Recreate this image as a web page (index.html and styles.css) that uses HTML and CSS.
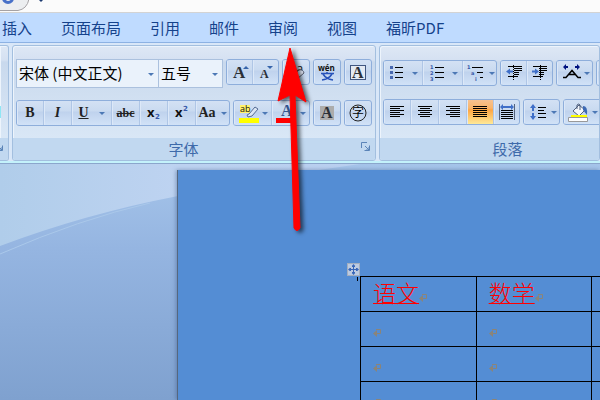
FILE: index.html
```
<!DOCTYPE html>
<html lang="zh-CN">

<head>
    <meta charset="utf-8">
    <title>Word</title>
    <link rel="stylesheet" href="styles.css">
</head>

<body>
    <div class="titlebar">
        <svg width="60" height="12" viewBox="0 0 60 12">
            <path d="M-2 10.500H18Q27 9 29 -1H-2Z" fill="#eceef0" stroke="#a5a2a5" />
            <circle cx="8" cy="-2" r="4.500" fill="none" stroke="#4770c8" stroke-width="3" />
            <path d="M39 0h4l-2 2z" fill="#1c3a70" />
        </svg>
    </div>
    <nav class="tabs">
        <a href="#">插入</a>
        <a href="#">页面布局</a>
        <a href="#">引用</a>
        <a href="#">邮件</a>
        <a href="#">审阅</a>
        <a href="#">视图</a>
        <a href="#">福昕PDF</a>
    </nav>

    <div class="ribbon">
        <div class="group clipboard">
            <div class="paste"></div>
            <div class="group-label">
                <button class="launcher" aria-label="剪贴板选项">
                    <svg width="9" height="9" viewBox="0 0 9 9"><path d="M.5 6V.5H6M3.500 8.500h5v-5M4 4l4 4M8 5v3H5" fill="none" stroke="#5b84b8" /></svg>
                </button>
            </div>
        </div>

        <div class="group font">
            <div class="rows">
                <div class="row">
                    <div class="combos">
                        <div class="combo family">
                            <select aria-label="字体"><option>宋体 (中文正文)</option></select>
                            <i class="arrow"></i>
                        </div>
                        <div class="combo size">
                            <select aria-label="字号"><option>五号</option></select>
                            <i class="arrow"></i>
                        </div>
                    </div>
                    <div class="btns">
                        <button class="w26" aria-label="增大字体">
                            <svg width="24" height="24" viewBox="0 0 24 24"><text class="serif" x="5" y="18" font-size="17">A</text><path d="M15 9l3-3 3 3z" fill="#3765ab" /></svg>
                        </button>
                        <button class="w25" aria-label="缩小字体">
                            <svg width="24" height="24" viewBox="0 0 24 24"><text class="serif" x="6" y="18" font-size="12">A</text><path d="M13 6h6l-3 3z" fill="#3765ab" /></svg>
                        </button>
                    </div>
                    <div class="btns">
                        <button class="w26" aria-label="清除格式">
                            <svg width="24" height="24" viewBox="0 0 24 24"><text class="sans" x="5" y="13" font-size="12">Aa</text><path d="M8 16l7-6q4-1 5 3l-7 6q-4 1-5-3z" fill="#dce3f2" stroke="#555c70" /></svg>
                        </button>
                    </div>
                    <div class="btns">
                        <button class="w26" aria-label="拼音指南">
                            <svg width="24" height="24" viewBox="0 0 24 24"><text class="sans bolder" x="3" y="11" font-size="8">wén</text><path d="M12 12v2M6 13.500h13M8 14q3 5 10 6M17 14q-3 5-10 6" fill="none" stroke="#2853ba" stroke-width="1.500" /></svg>
                        </button>
                    </div>
                    <div class="btns">
                        <button class="w26" aria-label="字符边框">
                            <svg width="24" height="24" viewBox="0 0 24 24"><rect x="4.500" y="5.500" width="15" height="14" fill="#e3e9f2" stroke="#405680" /><text class="serif" x="6" y="18" font-size="16">A</text></svg>
                        </button>
                    </div>
                </div>

                <div class="row">
                    <div class="btns">
                        <button class="w27 bold">B</button>
                        <button class="w28 italic">I</button>
                        <button class="w40 underline"><u>U</u><i class="arrow"></i></button>
                        <button class="w28 strike"><s>abc</s></button>
                        <button class="w28" aria-label="下标">
                            <svg width="24" height="24" viewBox="0 0 24 24"><text class="sans bolder" x="5" y="16" font-size="13">x</text><text class="blue" x="13" y="18" font-size="7">2</text></svg>
                        </button>
                        <button class="w28" aria-label="上标">
                            <svg width="24" height="24" viewBox="0 0 24 24"><text class="sans bolder" x="5" y="16" font-size="13">x</text><text class="blue" x="13" y="10" font-size="7">2</text></svg>
                        </button>
                        <button class="w33 case">Aa<i class="arrow"></i></button>
                    </div>
                    <div class="btns">
                        <button class="w38" aria-label="突出显示">
                            <svg width="24" height="24" viewBox="0 0 24 24"><path d="M2 4h10v8H2z" fill="#fff36b" /><text class="sans" x="2" y="11" font-size="9">ab</text><path d="M9 14l2-1 6-7 3 2-6 7-4 1z" fill="#dce6f5" stroke="#536a93" /><path d="M1 17h20v5H1z" fill="#ff0" /></svg>
                            <i class="arrow"></i>
                        </button>
                        <button class="w37" aria-label="字体颜色">
                            <svg width="24" height="24" viewBox="0 0 24 24"><text class="serif navy" x="5" y="15" font-size="16">A</text><path d="M0 17h18v5H0z" fill="red" /></svg>
                            <i class="arrow"></i>
                        </button>
                    </div>
                    <div class="btns">
                        <button class="w26" aria-label="字符底纹">
                            <svg width="24" height="24" viewBox="0 0 24 24"><path d="M5 5h14v14H5z" fill="#acacac" /><text class="serif" x="6" y="17" font-size="16">A</text></svg>
                        </button>
                    </div>
                    <div class="btns">
                        <button class="w26" aria-label="带圈字符">
                            <svg width="24" height="24" viewBox="0 0 24 24"><circle cx="12" cy="12" r="8" fill="none" stroke="#222" /><text class="cjk" x="6" y="16" font-size="12">字</text></svg>
                        </button>
                    </div>
                </div>
            </div>
            <div class="group-label">字体
                <button class="launcher" aria-label="字体选项">
                    <svg width="9" height="9" viewBox="0 0 9 9"><path d="M.5 6V.5H6M3.500 8.500h5v-5M4 4l4 4M8 5v3H5" fill="none" stroke="#5b84b8" /></svg>
                </button>
            </div>
        </div>

        <div class="group paragraph">
            <div class="rows">
                <div class="row">
                    <div class="btns">
                        <button class="w39" aria-label="项目符号">
                            <svg width="24" height="24" viewBox="0 0 24 24"><path d="M2 5h3v3H2zM2 10h3v3H2zM2 15h3v3H2z" fill="#4667b0" /><path d="M7 6.500h8M7 11.500h8M7 16.500h8" stroke="#000" /></svg>
                            <i class="arrow"></i>
                        </button>
                        <button class="w40" aria-label="编号">
                            <svg width="24" height="24" viewBox="0 0 24 24"><g class="blue" font-size="5"><text x="2" y="8">1</text><text x="2" y="14">2</text><text x="2" y="20">3</text></g><path d="M7 6.500h9M7 11.500h9M7 16.500h9" stroke="#000" /></svg>
                            <i class="arrow"></i>
                        </button>
                        <button class="w33" aria-label="多级列表">
                            <svg width="24" height="24" viewBox="0 0 24 24"><g class="blue" font-size="5"><text x="2" y="8">1</text><text x="6" y="14">a</text><text x="10" y="20">i</text></g><path d="M7 6.500h11M12 11.500h6M15 16.500h3" stroke="#000" /></svg>
                            <i class="arrow"></i>
                        </button>
                    </div>
                    <div class="btns">
                        <button class="w26" aria-label="减少缩进">
                            <svg width="24" height="24" viewBox="0 0 24 24"><path d="M6 5.500h14M12 7.500h8M12 9.500h8M12 11.500h5M12 13.500h5M6 15.500h10" stroke="#000" /><path d="M11.500 4v16" stroke="#000" stroke-dasharray="1 1" /><path d="M4 10.500l4-3v2h3v2H8v2z" fill="#3f6fc8" /></svg>
                        </button>
                        <button class="w25" aria-label="增加缩进">
                            <svg width="24" height="24" viewBox="0 0 24 24"><path d="M5 5.500h14M11 7.500h8M11 9.500h8M11 11.500h5M11 13.500h5M5 15.500h10" stroke="#000" /><path d="M12.500 4v16" stroke="#000" stroke-dasharray="1 1" /><path d="M11 10.500l-4-3v2H4v2h3v2z" fill="#3f6fc8" /></svg>
                        </button>
                    </div>
                    <div class="btns">
                        <button class="w35" aria-label="中文版式">
                            <svg width="24" height="24" viewBox="0 0 24 24"><path d="M3 16.500h3l6-7 6 7h3M8 13.500h8" fill="none" stroke="#000" stroke-width="1.500" /><path d="M3 6l3-3v2h2v2H6v2zM20 6l-3-3v2h-2v2h2v2z" fill="#00127f" /></svg>
                            <i class="arrow"></i>
                        </button>
                    </div>
                    <div class="btns">
                        <button class="w26" aria-label="排序"></button>
                    </div>
                </div>

                <div class="row">
                    <div class="btns">
                        <button class="w27" aria-label="左对齐">
                            <svg width="24" height="24" viewBox="0 0 24 24"><path d="M5 6.500h14M5 8.500h10M5 10.500h14M5 12.500h10M5 14.500h14M5 16.500h10" stroke="#000" /></svg>
                        </button>
                        <button class="w28" aria-label="居中">
                            <svg width="24" height="24" viewBox="0 0 24 24"><path d="M5 6.500h14M7 8.500h10M5 10.500h14M7 12.500h10M5 14.500h14M7 16.500h10" stroke="#000" /></svg>
                        </button>
                        <button class="w28" aria-label="右对齐">
                            <svg width="24" height="24" viewBox="0 0 24 24"><path d="M5 6.500h14M9 8.500h10M5 10.500h14M9 12.500h10M5 14.500h14M9 16.500h10" stroke="#000" /></svg>
                        </button>
                        <button class="w27 active" aria-label="两端对齐">
                            <svg width="24" height="24" viewBox="0 0 24 24"><path d="M5 6.500h14M5 8.500h14M5 10.500h14M5 12.500h14M5 14.500h14M5 16.500h14" stroke="#000" /></svg>
                        </button>
                        <button class="w25" aria-label="分散对齐">
                            <svg width="24" height="24" viewBox="0 0 24 24"><path d="M6 10.500h12M6 12.500h12M6 14.500h12M6 16.500h12M6 18.500h12" stroke="#000" /><path d="M4.500 4v16M19.500 4v16" stroke="#53627c" /><path d="M5 7l3-3v2h8V4l3 3-3 3V8H8v2z" fill="#3f6fc8" /></svg>
                        </button>
                    </div>
                    <div class="btns">
                        <button class="w35" aria-label="行距">
                            <svg width="24" height="24" viewBox="0 0 24 24"><path d="M11 7.500h8M11 10.500h6M11 13.500h8M11 17.500h8" stroke="#000" /><path d="M6 4l3 4H7v3H5V8H3zM6 20l3-4H7v-3H5v3H3z" fill="#3f6fc8" /></svg>
                            <i class="arrow"></i>
                        </button>
                    </div>
                    <div class="btns">
                        <button class="w38" aria-label="底纹">
                            <svg width="24" height="24" viewBox="0 0 24 24"><path d="M5 11l6-6 6 5-6 6z" fill="#f4f7fc" stroke="#4f5f7c" /><path d="M9 9V5q2-2 3 0v5" fill="none" stroke="#4f5f7c" /><path d="M15 6q5 0 4 9l-4-5z" fill="#3d69b4" /><path d="M3 15h16v2H3z" fill="#ff0" /><path d="M.5 17.500h19v4H.5z" fill="#fff" stroke="#999" /></svg>
                            <i class="arrow"></i>
                        </button>
                        <button class="w26" aria-label="边框"></button>
                    </div>
                </div>
            </div>
            <div class="group-label">段落</div>
        </div>
    </div>

    <div class="workspace">
        <svg class="swoosh" viewBox="0 0 600 236" preserveAspectRatio="none">
            <defs>
                <linearGradient id="sky" x1="0" y1="0" x2="1" y2="0">
                    <stop offset="0" stop-color="#b0cdea" />
                    <stop offset=".3" stop-color="#bed3f1" />
                    <stop offset="1" stop-color="#b4cdef" />
                </linearGradient>
                <linearGradient id="hill" x1="0" y1="0" x2="0" y2="1">
                    <stop offset="0" stop-color="#a6c5ea" />
                    <stop offset=".36" stop-color="#95b5e1" />
                    <stop offset="1" stop-color="#7fa1cf" />
                </linearGradient>
            </defs>
            <path d="M0 0H600V236H0z" fill="url(#sky)" />
            <path d="M0 82Q85 50 178 32Q270 12 360 0H600V236H0z" fill="url(#hill)" />
            <path d="M0 90Q80 55 150 39" fill="none" stroke="#aac8ea" />
        </svg>
        <div class="page">
            <div class="table-wrap">
                <button class="move" aria-label="移动表格">
                    <svg width="11" height="11" viewBox="0 0 11 11"><path d="M5.500 1v9M1 5.500h9" stroke="#3866b8" /><path d="M3 3l2.500-3L8 3zM3 8l2.500 3L8 8zM3 3L0 5.500 3 8zM8 3l3 2.500L8 8z" fill="#3866b8" /><path d="M2 2h2v2H2zM7 2h2v2H7zM2 7h2v2H2zM7 7h2v2H7z" fill="#bccbe2" /></svg>
                </button>
                <i class="caret"></i>
                <table>
                    <tr>
                        <th><u>语文</u><svg class="mark" viewBox="0 0 8 8"><path d="M3 .5h4.500V4.500H2" /><path class="tip" d="M0 4.500L4 1v7z" /></svg></th>
                        <th><u>数学</u><svg class="mark" viewBox="0 0 8 8"><path d="M3 .5h4.500V4.500H2" /><path class="tip" d="M0 4.500L4 1v7z" /></svg></th>
                        <th></th>
                    </tr>
                    <tr>
                        <td><svg class="mark" viewBox="0 0 8 8"><path d="M3 .5h4.500V4.500H2" /><path class="tip" d="M0 4.500L4 1v7z" /></svg></td>
                        <td><svg class="mark" viewBox="0 0 8 8"><path d="M3 .5h4.500V4.500H2" /><path class="tip" d="M0 4.500L4 1v7z" /></svg></td>
                        <td></td>
                    </tr>
                    <tr>
                        <td><svg class="mark" viewBox="0 0 8 8"><path d="M3 .5h4.500V4.500H2" /><path class="tip" d="M0 4.500L4 1v7z" /></svg></td>
                        <td><svg class="mark" viewBox="0 0 8 8"><path d="M3 .5h4.500V4.500H2" /><path class="tip" d="M0 4.500L4 1v7z" /></svg></td>
                        <td></td>
                    </tr>
                    <tr>
                        <td><svg class="mark" viewBox="0 0 8 8"><path d="M3 .5h4.500V4.500H2" /><path class="tip" d="M0 4.500L4 1v7z" /></svg></td>
                        <td><svg class="mark" viewBox="0 0 8 8"><path d="M3 .5h4.500V4.500H2" /><path class="tip" d="M0 4.500L4 1v7z" /></svg></td>
                        <td></td>
                    </tr>
                </table>
            </div>
        </div>
    </div>

    <!-- red arrow pointing at 审阅 -->
    <svg class="pointer" width="50" height="200" viewBox="0 0 50 200">
        <path d="M20 2L36 56 25 49 30 182Q27 187 24 182L20 49 8 55Z" fill="red" stroke="red" stroke-linejoin="miter" />
    </svg>
</body>

</html>
```
FILE: styles.css
```
* {
    margin: 0;
    padding: 0;
    box-sizing: border-box;
}

body {
    height: 100vh;
    display: flex;
    flex-direction: column;
    overflow: hidden;
    font-family: 'Noto Sans CJK SC', sans-serif;
    font-size: 15px;
}

button {
    font: inherit;
    border: none;
    background: none;
}

svg {
    display: block;
    flex: none;
}

.titlebar {
    height: 13px;
    flex: none;
    background-color: #fbfbfb;
    border-bottom: 1px solid #d3d3d3;
}

.tabs {
    display: flex;
    align-items: center;
    flex: none;
    gap: 29px;
    height: 30px;
    padding-left: 2px;
    background-color: #bfdbff;
    border-bottom: 1px solid #8db2e3;
}

.tabs a {
    color: #15428b;
    text-decoration: none;
    white-space: nowrap;
    line-height: 22px;
}

/* ribbon */
.ribbon {
    display: flex;
    flex: none;
    gap: 3px;
    padding-top: 2px;
    background-color: #d9e7f8;
    border-bottom: 2px solid #c3f2fb;
}

.group {
    display: flex;
    flex-direction: column;
    border: 1px solid #a3bfdf;
    border-radius: 3px;
    overflow: hidden;
    background-image: linear-gradient(#dee8f5, #d5e1f2 14px, #c9d9ed 16px, #d9e7f6 92px);
    box-shadow: inset 1px 1px #edf4fc;
}

.clipboard {
    width: 9px;
    border-left: none;
    border-radius: 0 3px 3px 0;
    justify-content: space-between;
}

.paste {
    width: 1px;
    height: 12px;
    margin-top: 60px;
    background-color: #8fe6f4;
}

.paragraph {
    flex: 1;
    min-width: 0;
}

.rows {
    display: flex;
    flex-direction: column;
    gap: 12px;
    padding: 13px 3px 12px;
}

.paragraph .rows {
    gap: 13px;
    padding: 14px 3px 13px;
}

.row {
    display: flex;
    align-items: flex-start;
    gap: 3px;
}

.group-label {
    position: relative;
    height: 22px;
    line-height: 22px;
    text-align: center;
    color: #3e6aaa;
    background-color: #c1d8f0;
}

.font .group-label {
    padding-right: 21px;
}

.paragraph .group-label {
    padding-left: 36px;
}

.launcher {
    position: absolute;
    right: 5px;
    top: 4px;
}

.combos {
    display: flex;
}

.combo {
    position: relative;
    height: 29px;
    background-color: #eaf2fb;
    border: 1px solid #abc1de;
}

.combo + .combo {
    border-left: none;
}

.family {
    width: 143px;
}

.size {
    width: 64px;
}

.combo select {
    display: block;
    width: 100%;
    height: 25px;
    padding-left: 2px;
    appearance: none;
    border: none;
    background: none;
    color: #000;
    font-family: 'Noto Sans CJK SC', sans-serif;
    font-size: 15px;
}

.combo .arrow {
    position: absolute;
    right: 4px;
    top: 13px;
}

.arrow {
    flex: none;
    width: 0;
    height: 0;
    border: 3px solid transparent;
    border-top-color: #4c78b5;
    border-bottom: none;
}

.btns {
    display: flex;
    flex: none;
    height: 26px;
    border: 1px solid #8eaedb;
    border-radius: 3px;
    overflow: hidden;
    background-image: linear-gradient(#d3e1f4, #c9daf0 10px, #bfd2ed 11px, #d1e2f7);
}

.btns button {
    display: flex;
    align-items: center;
    justify-content: center;
    flex: none;
    height: 24px;
    color: #222;
    border-right: 1px solid #afc6e6;
    box-shadow: inset 1px 0 #dce8f8;
}

.btns button:last-child {
    border-right: none;
}

.btns button:hover {
    background-color: #ffe6a0;
}

.btns .active {
    background-image: linear-gradient(#f5c191, #f9b56b 8px, #fda645 10px, #ffe997);
}

.w25 { width: 25px; }
.w26 { width: 26px; }
.w27 { width: 27px; }
.w28 { width: 28px; }
.w33 { width: 33px; }
.w35 { width: 35px; }
.w37 { width: 37px; }
.w38 { width: 38px; }
.w39 { width: 39px; }
.w40 { width: 40px; }

.btns .bold,
.btns .italic,
.btns .underline,
.btns .case {
    font-family: 'Liberation Serif', serif;
    font-weight: bold;
    font-size: 14px;
}

.btns .italic {
    font-style: italic;
}

.btns .underline {
    gap: 10px;
}

.btns .case {
    gap: 5px;
}

.btns .strike {
    font-family: 'Liberation Serif', serif;
    font-weight: bold;
    font-size: 12px;
}

.serif {
    font-family: 'Liberation Serif', serif;
    font-weight: bold;
    fill: #2b3038;
}

.navy {
    fill: #35568f;
}

.sans {
    font-family: 'Open Sans', sans-serif;
    fill: #111;
}

.bolder {
    font-weight: bold;
}

.cjk {
    font-family: 'Noto Sans CJK SC', sans-serif;
}

.blue {
    font-family: 'DejaVu Sans', sans-serif;
    font-weight: bold;
    fill: #3556a8;
}

/* document area */
.workspace {
    position: relative;
    flex: 1;
    min-height: 0;
    padding: 6px 0 0 177px;
    overflow: hidden;
    border-top: 1px solid #8ba6cc;
}

.swoosh {
    position: absolute;
    left: 0;
    top: 0;
    width: 100%;
    height: 100%;
}

.page {
    position: relative;
    height: 100%;
    padding: 106px 0 0 182px;
    background-color: #548dd4;
    border-left: 1px solid #55677f;
    box-shadow: -1px 0 4px rgba(60, 90, 140, 0.5);
}

.table-wrap {
    position: relative;
}

.move {
    position: absolute;
    left: -13px;
    top: -13px;
    width: 13px;
    height: 13px;
    background-color: #bccbe2;
    border: 1px solid #a3aebf;
}

.caret {
    position: absolute;
    left: -3px;
    top: 1px;
    width: 1px;
    height: 4px;
    background-color: #000;
}

table {
    border-collapse: collapse;
    table-layout: fixed;
    width: 348px;
}

th,
td {
    height: 35px;
    padding-left: 12px;
    text-align: left;
    vertical-align: middle;
    border: 1px solid #000;
    line-height: 30px;
}

td {
    padding-top: 8px;
}

th {
    vertical-align: top;
    color: #f00;
    font-weight: 300;
    font-size: 23px;
}

th u {
    text-decoration-thickness: 1px;
}

.mark {
    width: 8px;
    height: 8px;
    fill: none;
    stroke: #8b8478;
}

th .mark {
    display: inline-block;
}

.mark .tip {
    fill: #8b8478;
    stroke: none;
}

.pointer {
    position: absolute;
    left: 270px;
    top: 46px;
    filter: drop-shadow(3px 2px 2px rgba(0, 0, 0, 0.6));
    pointer-events: none;
}
```
